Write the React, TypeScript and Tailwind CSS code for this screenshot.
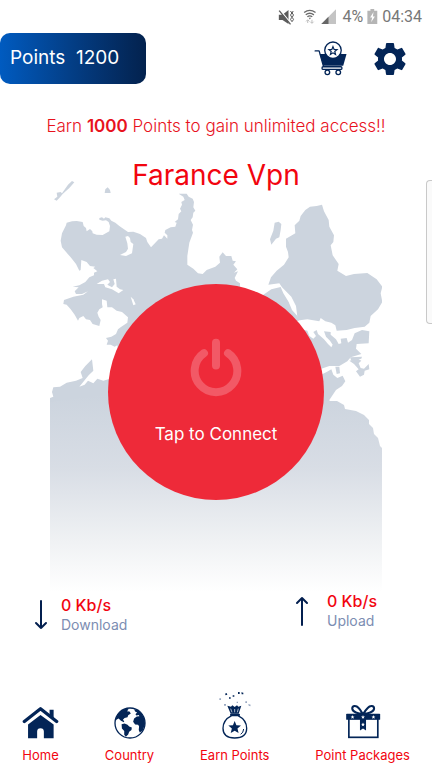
import type { ReactNode } from 'react';
import { MdSettings } from 'react-icons/md';

const STAR = 'M0-10 2.6-3.6 9.5-3.1 4.2 1.4 5.9 8.1 0 4.5-5.9 8.1-4.2 1.4-9.5-3.1-2.6-3.6Z';

function StatusBar() {
  return (
    <div className="flex h-[33px] items-center justify-end pr-[10px] font-['Roboto',sans-serif] text-base text-[#777]">
      {/* Muted / vibrate */}
      <svg viewBox="30 20 50 48" className="mr-2 h-4 w-[17px]" fill="none">
        <path d="M32 37h11l18-14v42L43 53H32Z" fill="#5c5c5c" />
        <path d="M33 20l36 44" stroke="#fff" strokeWidth="4" />
        <path d="M33 25l34 41" stroke="#5c5c5c" strokeWidth="4" />
        <path d="M67 26l4 6-4 6 4 7-4 6 4 7M75 26l-3 6 4 6-4 7 4 6-4 7" stroke="#5c5c5c" strokeWidth="3" />
      </svg>
      {/* Wifi */}
      <svg viewBox="104 20 42 46" className="mr-1 h-[15px] w-[14px]" fill="none" strokeWidth="4">
        <path d="M107 31q17-14 35 0M112 38q12-10 25 0M117 44q7-6 15 0" stroke="#6a6a6a" />
        <path d="M121 47h7l-3.500 5z" fill="#6a6a6a" />
        <path d="M118 63v-9m-5 4 5-5 5 5M131 53v10m-5-4 5 5 5-5" stroke="#bbb" strokeWidth="3" />
      </svg>
      {/* Signal */}
      <svg viewBox="158 22 44 44" className="mr-1.5 h-[15px] w-[15px]">
        <path d="M159 66l43-43v43z" fill="#c4c4c4" />
        <path d="M159 66l21-21v21z" fill="#666" />
      </svg>
      <span>4%</span>
      {/* Battery */}
      <svg viewBox="290 22 32 44" className="mx-1 h-[15px] w-[11px]">
        <path d="M300 22h11v5h9v39h-29V27h9z" fill="#b5b5b5" />
        <path d="M309 31l-10 16h6l-3 14 11-17h-6z" fill="#fff" />
      </svg>
      <span>04:34</span>
    </div>
  );
}

function CartIcon() {
  return (
    <svg viewBox="130 124 102 106" className="h-[35px] w-[34px]" fill="none" stroke="currentColor">
      <path d="M133 154h12l13 46" strokeWidth="4" strokeLinecap="round" strokeLinejoin="round" />
      <path d="M147 163h81l-10 36h-60z" fill="currentColor" stroke="none" />
      <rect x="154" y="202" width="60" height="8" rx="3" strokeWidth="4" />
      <circle cx="170" cy="219" r="7" strokeWidth="4" />
      <circle cx="203" cy="219" r="7" strokeWidth="4" />
      <circle cx="187" cy="152" r="25" fill="#fff" strokeWidth="4" />
      <path d={STAR} transform="translate(187 154) scale(1.3)" strokeWidth="2.800" />
    </svg>
  );
}

function HomeIcon() {
  return (
    <svg viewBox="66 64 110 98" className="h-[33px] w-[37px]">
      <path d="M73 110l48-38 48 38" fill="none" stroke="currentColor" strokeWidth="10" strokeLinecap="round" strokeLinejoin="round" />
      <path d="M148 75h12v27l-12-9z" fill="currentColor" />
      <path d="M84 160v-41l37-28 39 28v41h-29v-20a10 10 0 0 0-20 0v20z" fill="currentColor" />
    </svg>
  );
}

function GlobeIcon() {
  return (
    <svg viewBox="339 64 97 97" className="h-8 w-8" fill="currentColor">
      <circle cx="387.500" cy="112.500" r="45.500" fill="none" stroke="currentColor" strokeWidth="4" />
      <path d="M343 108c1-17 13-34 34-40l6 4-5 5 8 1 4 6-8 5-2 6-9 2-5 6 4 4-1 3-9-4-7-7-6 3z" />
      <path d="M362 116l9-2 9 4 5 5 8 3-1 8-7 5-3 8-7 7-5-6v-11l-7-8z" />
      <path d="M400 71l12 2 12 12 8 15 1 16-7 19-9 6-3-7 1-12-3-4-9-1-6-8 3-10 8-6 8-1-2-4-7 2-3-4 5-5-6-3z" />
    </svg>
  );
}

function BagIcon() {
  return (
    <svg viewBox="83 22 102 144" className="h-12 w-[34px]" fill="currentColor">
      <path d="M124 96c-16 8-26 22-26 38 0 20 14 29 35 29s36-9 36-29c0-16-10-30-26-38z" fill="none" stroke="currentColor" strokeWidth="4" />
      <rect x="119" y="90" width="30" height="7" rx="3" />
      <path d="M111 66l11 3 4-4 7 5 7-5 4 4 9-3-8 24h-24z" />
      <path d="M121 75l4 11M133 76v10M144 75l-3 11" stroke="#fff" strokeWidth="2" />
      <path d={STAR} transform="translate(133 132) scale(2)" />
      <path d="M160 136q-1 11-9 16" fill="none" stroke="currentColor" strokeWidth="3" />
      <path d="M104 30l5-2 2 5-5 2zM127 35h5v4h-5zM143 25h5v6h-5zM153 26l6 1v5h-5zM116 41h5v4h-5z" />
      <path d="M87 44h5v5h-5zM101 61h6v5h-6zM165 53h5v5h-5zM174 61l7 2-1 5-5-2zM139 54h4v4h-4z" fill="#9aa9c2" />
    </svg>
  );
}

function GiftIcon() {
  return (
    <svg viewBox="463 62 106 104" className="h-[35px] w-[36px]" fill="none" stroke="currentColor">
      <rect x="474" y="105" width="86" height="56" strokeWidth="5" />
      <rect x="466" y="91" width="101" height="18" rx="2" fill="currentColor" stroke="none" />
      <path d="M515 91c-13 0-30-5-31-15 0-10 12-10 19-2 6 6 9 12 12 17zM517 91c13 0 31-5 32-15 0-10-12-10-19-2-6 6-10 12-13 17z" strokeWidth="6" />
      <path d="M507 106h18v35l-9-6-9 6z" fill="currentColor" stroke="none" />
      <g fill="#fff" stroke="none">
        <path d={STAR} transform="translate(485 101) scale(.6)" />
        <path d={STAR} transform="translate(516 101) scale(.6)" />
        <path d={STAR} transform="translate(547 101) scale(.6)" />
        <path d={STAR} transform="translate(516 123) scale(.6)" />
      </g>
    </svg>
  );
}

function WorldMap() {
  return (
    <svg viewBox="50 155 332 440" className="col-start-1 row-start-1 w-full" aria-hidden="true">
      <defs>
        <linearGradient id="fade" x1="0" y1="395" x2="0" y2="592" gradientUnits="userSpaceOnUse">
          <stop offset="0" stopColor="#ccd4de" />
          <stop offset=".37" stopColor="#d8dde5" />
          <stop offset=".75" stopColor="#f0f2f4" />
          <stop offset="1" stopColor="#fff" />
        </linearGradient>
      </defs>

      {/* Western half */}
      <g transform="translate(40 170) scale(.33333)" fill="#ccd4de">
        <path d="M42 88L52 80 50 68 62 66 66 70 84 44 96 33 103 37 88 54 68 72 60 82 50 92ZM194 69L196 58 203 52 210 60 212 69Z" />
        <path
          d="M62 212L66 190 78 166 80 158 96 154 110 153 128 156 131 168 138 174 140 184 150 177 157 184 158 190 170 194 188 195 208 184 210 168
          206 156 198 151 188 152 178 149 178 144 186 142 192 146 196 142 208 145 214 152 226 158 238 168 252 178 264 186 280 185 300 192
          318 204 322 216 333 232 346 218 356 208 366 206 372 196 382 206 382 196 374 188 376 180 392 172 406 170 410 158 404 156 414 148
          416 132 424 124 420 116 426 104 424 96 434 90 430 80 416 71 440 71 446 80 458 86 462 96 460 112 466 122 460 128 458 142 452 150
          459 164 456 180 459 188 448 218 442 258 442 284 460 296 474 310 488 312 500 300 526 290 540 278 538 260 548 247 558 258 574 258
          578 272 588 274 580 284 592 298 582 308 594 304 584 324 588 332 600 340 600 344 610 600 240 600 232 526 224 530 212 524 200 524
          204 512 198 504 214 500 228 492 234 478 244 470 262 458 264 442 246 426 230 422 216 412 202 412 200 392 186 388 186 402 188 412
          178 418 172 428 176 440 182 450 178 468 158 462 150 450 138 448 130 438 118 444 114 452 104 434 92 418 80 404 70 402 72 390
          100 380 130 374 144 364 126 372 108 372 104 364 116 352 98 350 118 346 136 336 148 322 162 316 162 308 172 304 160 294 166 290
          150 288 140 276 124 270 122 300 118 302 108 282 92 262 66 232Z"
        />
        <path d="M30 720L30 684 40 680 36 666 40 652 60 650 80 638 108 632 128 624 122 606 136 588 156 568 160 602 146 616 118 650 134 644 144 632 160 640 172 626 190 632 210 626 210 720Z" />
        <g fill="#fff">
          <path d="M256 200L264 198 270 204 272 216 280 222 276 250 258 258 240 255 258 246 264 236 262 220Z" />
          <path d="M170 342L186 332 204 328 210 336 202 344 216 352 224 342 220 328 228 326 230 350 240 358 250 360 236 370 216 358 196 352 192 342Z" />
          <path d="M272 380L280 388 287 403 280 406Z" />
        </g>
      </g>

      {/* Eastern half */}
      <g transform="translate(230 170) scale(.33333)" fill="#ccd4de">
        <path d="M134 158L146 155 154 162 152 180 148 202 138 206 124 224 120 208 130 182Z" />
        <path
          d="M115 344L123 322 140 302 162 284 176 262 174 246 168 230 168 206 196 190 194 166 208 152 212 138 226 120 240 110 260 108 276 104
          282 124 296 150 298 170 312 196 310 216 302 226 308 256 326 282 322 302 332 308 348 318 372 312 412 309 440 328 457 350 452 370
          457 396 444 418 422 438 418 458 404 470 374 474 350 480 320 482 316 466 304 458 286 454 272 444 268 454 232 448 198 452 202 440
          198 408 184 380 156 352 148 340Z"
        />
        <path d="M98 376L124 358 152 351 160 370 176 396 186 420 204 440 206 452 160 460 100 420Z" />
        <path
          d="M210 476L232 482 238 498 250 506 258 498 250 486 260 480 264 492 282 508 294 522 304 532 308 524 300 512 288 500 282 484 302 486
          302 494 318 508 326 522 334 520 332 506 350 504 354 518 366 510 374 490 396 480 418 484 416 520 380 522 378 536 394 552 362 562
          352 574 328 588 298 588 274 596 230 596Z"
        />
        <path d="M358 572L384 566 394 572 386 580 392 594 402 596 416 582 418 598 404 602 402 614 390 620 378 604 386 598 372 582Z" />
        <path d="M316 590L328 590 330 610 320 612ZM270 616L290 606 304 598 310 614 322 624 338 617 346 634 336 648 318 660 298 690 306 710 260 740Z" />
        <path d="M360 562L396 560 394 566 364 572Z" />
      </g>

      {/* Southern landmass fading out */}
      <path
        d="M50 402l60-8 206 6 12 1 9 0 7 4 1 4 11 2 8 4 5 5v4l4 4 1 6 4 4 2 8 4 4v144H50z"
        fill="url(#fade)"
      />
    </svg>
  );
}

function SpeedArrow({ up }: { up?: boolean }) {
  return (
    <svg viewBox="0 0 14 30" className="h-[30px] w-[14px] text-[#031f4f]" fill="none" stroke="currentColor" strokeWidth="2" strokeLinecap="round" strokeLinejoin="round">
      <path d={up ? 'M7 29V2M2 7l5-5 5 5' : 'M7 1v27M2 23l5 5 5-5'} />
    </svg>
  );
}

function Speed({ value, label, up }: { value: string; label: string; up?: boolean }) {
  return (
    <div className="flex items-center">
      <SpeedArrow up={up} />
      <div className={up ? 'ml-[18px]' : 'ml-[13px]'}>
        <p className="text-base leading-5 font-medium text-[#f2050f]">{value}</p>
        <p className="text-sm leading-5 text-[#7c8db2]">{label}</p>
      </div>
    </div>
  );
}

function NavItem({ icon, label }: { icon: ReactNode; label: string }) {
  return (
    <a href="#" className="flex flex-col items-center gap-1.5 text-[#032557]">
      {icon}
      <span className="text-[13px] leading-5 text-[#f2050f]">{label}</span>
    </a>
  );
}

export default function App() {
  return (
    <main className="relative flex min-h-screen flex-col bg-white font-['Inter',sans-serif]">
      <StatusBar />

      <header className="flex items-center justify-between pr-[22px]">
        <button className="h-[51px] w-[146px] rounded-[10px] bg-linear-to-r from-[#005bc0] to-[#03224e] pl-[10px] text-left text-[19px] text-white">
          Points&nbsp; 1200
        </button>
        <div className="flex items-center gap-[22px] text-[#032557]">
          <button aria-label="Point store">
            <CartIcon />
          </button>
          <button aria-label="Settings">
            <MdSettings className="h-10 w-10" />
          </button>
        </div>
      </header>

      <p className="mt-8 mb-[19px] text-center text-[17px] leading-5 font-light text-[#e8121d]">
        Earn <span className="font-semibold">1000</span> Points to gain unlimited access!!
      </p>

      <section className="mx-auto grid w-full max-w-[432px] px-[50px]">
        <WorldMap />
        <div className="col-start-1 row-start-1 flex flex-col items-center">
          <h1 className="text-[28px] leading-10 text-[#f2050f]">Farance Vpn</h1>
          <button className="mt-[89px] flex h-54 w-54 flex-col items-center rounded-full bg-[#ee2a39] pt-[54px] text-[17px] text-white">
            <svg viewBox="268 24 156 176" className="h-[59px] w-[52px]" fill="none" stroke="#f25966" strokeWidth="24" strokeLinecap="round">
              <path d="M310 69a64 64 0 1 0 72 0M346 38v68" />
            </svg>
            <span className="mt-[25px]">Tap to Connect</span>
          </button>
        </div>
      </section>

      <div className="-mt-1 flex items-end justify-between pr-[55px] pl-[34px]">
        <Speed value="0 Kb/s" label="Download" />
        <div className="pb-1">
          <Speed value="0 Kb/s" label="Upload" up />
        </div>
      </div>

      <nav className="mt-auto flex items-end justify-between px-[22px] pb-[3px]">
        <NavItem icon={<HomeIcon />} label="Home" />
        <NavItem icon={<GlobeIcon />} label="Country" />
        <NavItem icon={<BagIcon />} label="Earn Points" />
        <NavItem icon={<GiftIcon />} label="Point Packages" />
      </nav>

      {/* Edge panel handle */}
      <div className="absolute top-[180px] right-0 h-36 w-[6px] rounded-l border border-r-0 border-[#c9c9c9] bg-[#fafafa]" />
    </main>
  );
}
